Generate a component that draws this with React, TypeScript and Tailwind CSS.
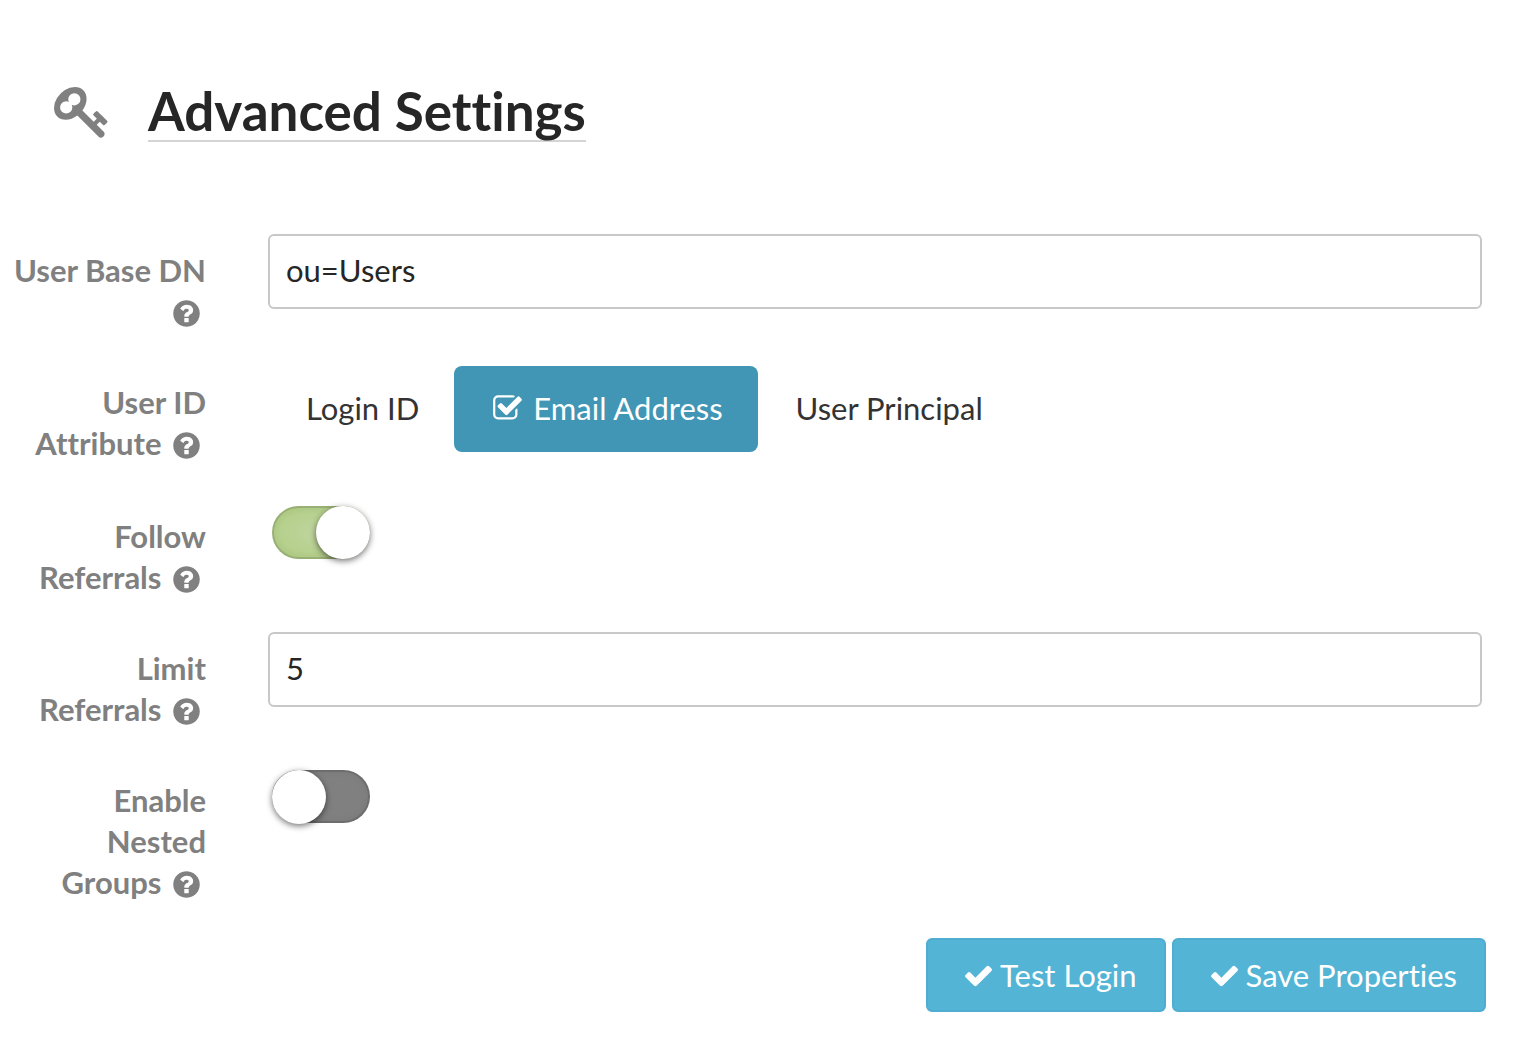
import React, { useId, useState } from "react";

const ICONS = {
  key: "M832 512q0-80-56-136t-136-56-136 56-56 136q0 42 19 83-41-19-83-19-80 0-136 56t-56 136 56 136 136 56 136-56 56-136q0-42-19-83 41 19 83 19 80 0 136-56t56-136zm851 704q0 17-49 66t-66 49q-9 0-28.5-16t-36.5-33-38.5-40-24.5-26l-96 96 220 220q28 28 28 68 0 42-39 81t-81 39q-40 0-68-28l-671-671q-176 131-365 131-163 0-265.5-102.5t-102.5-265.5q0-160 95-313t248-248 313-95q163 0 265.5 102.5t102.5 265.5q0 189-131 365l355 355 96-96q-3-3-26-24.5t-40-38.5-33-36.5-16-28.5q0-17 49-66t66-49q13 0 23 10 6 6 46 44.5t82 79.5 86.5 86 73 78 28.5 41z",
  question:
    "M1024 1376v-192q0-14-9-23t-23-9h-192q-14 0-23 9t-9 23v192q0 14 9 23t23 9h192q14 0 23-9t9-23zm256-672q0-88-55.5-163t-138.5-116-170-41q-243 0-371 213-15 24 8 42l132 100q7 6 19 6 16 0 25-12 53-68 86-92 34-24 86-24 48 0 85.5 26t37.5 59q0 38-20 61t-68 45q-63 28-115.5 86.5t-52.5 125.5v36q0 14 9 23t23 9h192q14 0 23-9t9-23q0-19 21.5-49.5t54.5-49.5q32-18 49-28.5t46-35 44.5-48 28-60.5 12.5-81zm384 192q0 209-103 385.5t-279.5 279.5-385.5 103-385.5-103-279.5-279.5-103-385.5 103-385.5 279.5-279.5 385.5-103 385.5 103 279.5 279.5 103 385.5z",
  check:
    "M1671 566q0 40-28 68l-724 724-136 136q-28 28-68 28t-68-28l-136-136-362-362q-28-28-28-68t28-68l136-136q28-28 68-28t68 28l294 295 656-657q28-28 68-28t68 28l136 136q28 28 28 68z",
  checkSquare:
    "M1472 930v318q0 119-84.5 203.5t-203.5 84.5h-832q-119 0-203.5-84.5t-84.5-203.5v-832q0-119 84.5-203.5t203.5-84.5h832q63 0 117 25 15 7 18 23 3 17-9 29l-49 49q-10 10-23 10-3 0-9-2-23-6-45-6h-832q-66 0-113 47t-47 113v832q0 66 47 113t113 47h832q66 0 113-47t47-113v-254q0-13 9-22l64-64q10-10 23-10 6 0 12 3 20 8 20 29zm231-489l-814 814q-24 24-57 24t-57-24l-430-430q-24-24-24-57t24-57l110-110q24-24 57-24t57 24l263 263 647-647q24-24 57-24t57 24l110 110q24 24 24 57t-24 57z",
};

function Icon({ name, className }: { name: keyof typeof ICONS; className: string }) {
  return (
    <svg viewBox="0 0 1792 1792" fill="currentColor" aria-hidden="true" className={className}>
      <path d={ICONS[name]} />
    </svg>
  );
}

function Row({
  label,
  htmlFor,
  labelId,
  className = "mb-[34px]",
  children,
}: {
  label: string;
  htmlFor?: string;
  labelId?: string;
  className?: string;
  children: React.ReactNode;
}) {
  return (
    <div className={`flex items-start ${className}`}>
      <div className="w-[206px] shrink-0 pt-4 pl-3 text-right leading-[41px] font-bold text-[#808080]">
        <label id={labelId} htmlFor={htmlFor}>
          {label}
        </label>{" "}
        <button type="button" aria-label={`Help: ${label}`} className="-mt-1 mr-1 ml-0.5 inline-block align-middle">
          <Icon name="question" className="size-[31px]" />
        </button>
      </div>
      <div className="ml-[62px] min-w-0 grow">{children}</div>
    </div>
  );
}

function TextField({ label, initial }: { label: string; initial: string }) {
  const id = useId();
  const [value, setValue] = useState(initial);
  return (
    <Row label={label} htmlFor={id}>
      <input
        id={id}
        type="text"
        value={value}
        onChange={(e) => setValue(e.target.value)}
        className="block h-[75px] w-full rounded-md border-2 border-[#c8c8c8] bg-white px-4 pb-1 text-[#262626] outline-none"
      />
    </Row>
  );
}

function Toggle({ label, initial, className }: { label: string; initial: boolean; className?: string }) {
  const id = useId();
  const [on, setOn] = useState(initial);
  return (
    <Row label={label} htmlFor={id} className={className}>
      <div className="relative mt-1.5 ml-1 h-[53px] w-[98px]">
        <input
          id={id}
          type="checkbox"
          role="switch"
          checked={on}
          onChange={(e) => setOn(e.target.checked)}
          className="peer block size-full cursor-pointer appearance-none rounded-full border-2 border-black/15 bg-[#808080] bg-origin-border shadow-[inset_0_0_8px_rgba(0,0,0,0.06)] checked:bg-[#b5d089] checked:bg-radial checked:from-[#c0d6a0] checked:to-[#afcc80]"
        />
        <span className="pointer-events-none absolute top-0 left-0 h-[54px] w-[54px] rounded-full bg-white shadow-[0_2px_6px_rgba(0,0,0,0.55)] peer-checked:left-11 peer-checked:h-[53px]" />
      </div>
    </Row>
  );
}

const ATTRIBUTES = ["Login ID", "Email Address", "User Principal"];

function AttributePicker() {
  const labelId = useId();
  const [selected, setSelected] = useState("Email Address");
  return (
    <Row label="User ID Attribute" labelId={labelId} className="mb-9">
      <div role="radiogroup" aria-labelledby={labelId} className="flex">
        {ATTRIBUTES.map((name) => (
          <label
            key={name}
            className="flex h-[86px] cursor-pointer items-center rounded-lg pr-[35px] pb-px pl-[38px] text-[#333333] has-checked:bg-[#4096b4] has-checked:text-white"
          >
            <input
              type="radio"
              name="attribute"
              checked={selected === name}
              onChange={() => setSelected(name)}
              className="sr-only"
            />
            {selected === name && <Icon name="checkSquare" className="mr-2.5 size-[31px]" />}
            {name}
          </label>
        ))}
      </div>
    </Row>
  );
}

function ActionButton({ children }: { children: string }) {
  return (
    <button
      type="button"
      className="flex h-[74px] items-center gap-1.5 rounded-md border-2 border-[#4eadd1] bg-[#53b4d5] pr-[27px] pl-[35px] text-white"
    >
      <Icon name="check" className="size-[31px]" />
      {children}
    </button>
  );
}

export default function App() {
  return (
    <main className="min-h-screen bg-white pt-[82px] pb-8 font-['Lato',sans-serif] text-[31px] text-[#262626] [font-variant-ligatures:none]">
      <header className="mb-[92px] flex h-[60px] items-center pl-[54px]">
        <Icon name="key" className="mr-[37px] mb-0.5 size-[57px] shrink-0 text-[#808080]" />
        <h1 className="border-b-2 border-[#d4d4d4] text-[53px] leading-[58px] font-bold">Advanced Settings</h1>
      </header>
      <form className="pr-[50px]" onSubmit={(e) => e.preventDefault()}>
        <TextField label="User Base DN" initial="ou=Users" />
        <AttributePicker />
        <Toggle label="Follow Referrals" initial={true} />
        <TextField label="Limit Referrals" initial="5" />
        <Toggle label="Enable Nested Groups" initial={false} className="mb-[35px]" />
        <div className="-mr-1 flex justify-end gap-1.5">
          <ActionButton>Test Login</ActionButton>
          <ActionButton>Save Properties</ActionButton>
        </div>
      </form>
    </main>
  );
}
